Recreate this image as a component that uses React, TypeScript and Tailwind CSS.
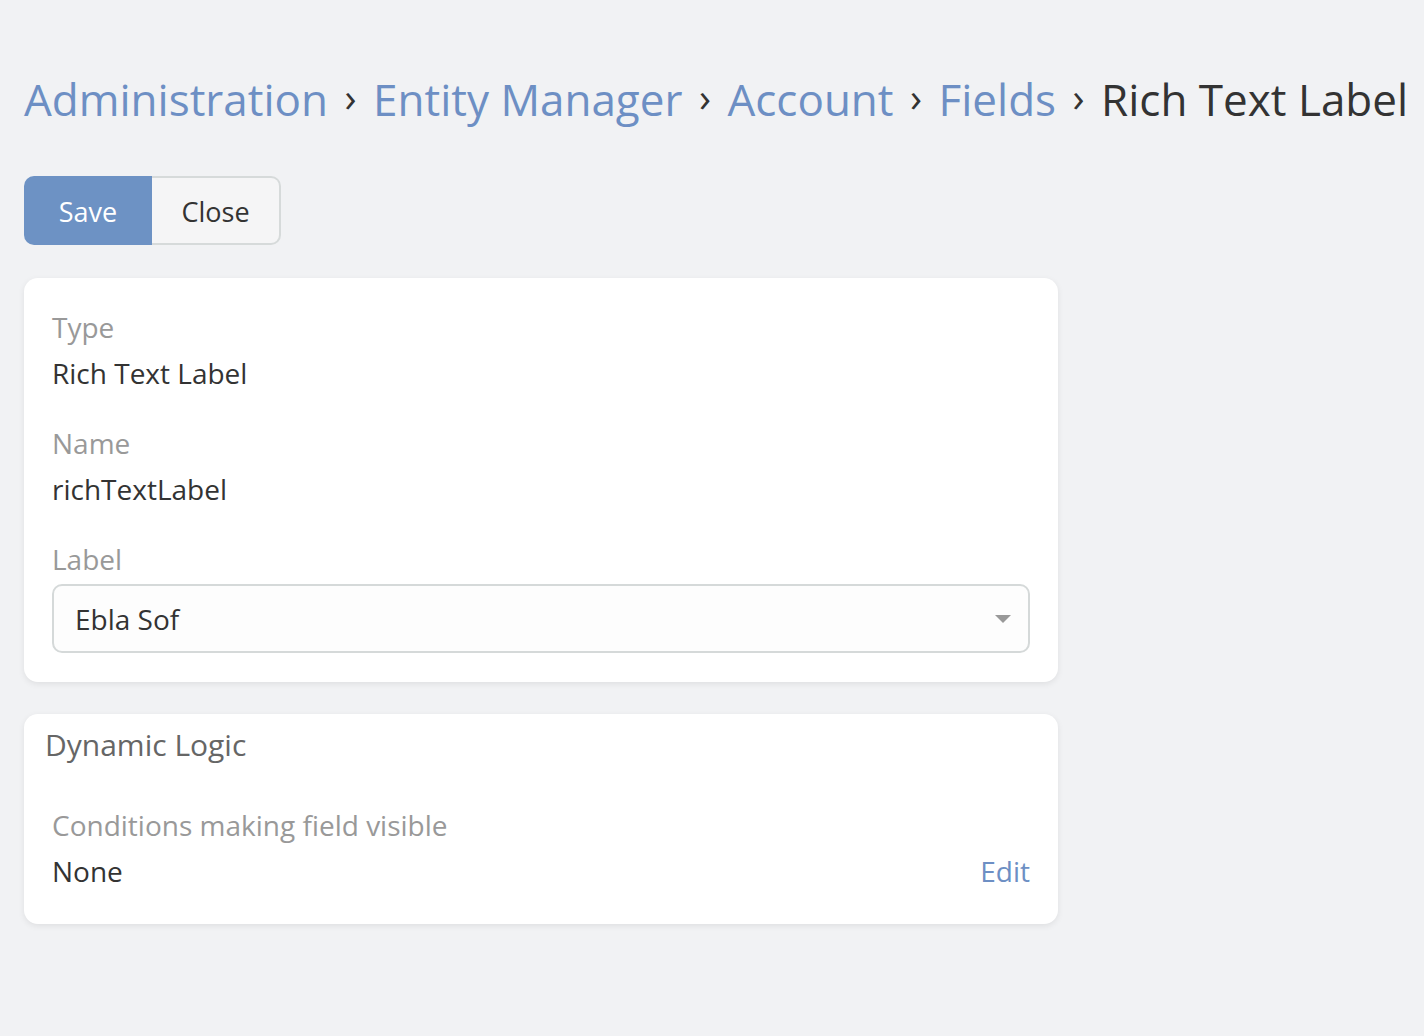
// Field edit view: breadcrumb header, action buttons, field panel and dynamic logic panel

const crumbs = ['Administration', 'Entity Manager', 'Account', 'Fields'];

function Separator() {
  return (
    <span className="inline-block w-[45px] text-center text-[#333] text-[40px] leading-none pb-[4px]">›</span>
  );
}

function Field({ label, children }: { label: string; children: React.ReactNode }) {
  return (
    <div>
      <div className="text-[28px] leading-[40px] text-[#999]">{label}</div>
      <div className="mt-[6px] text-[28px] leading-[40px] text-[#333]">{children}</div>
    </div>
  );
}

export default function App() {
  return (
    <div
      className="min-h-[1036px] bg-[#f1f2f4] px-[24px] pt-[69px]"
      style={{ fontFamily: '"Open Sans", "Noto Sans", sans-serif' }}
    >
      {/* Breadcrumb */}
      <div className="flex items-center h-[60px] text-[44px] whitespace-nowrap">
        {crumbs.map((c) => (
          <span key={c} className="flex items-center">
            <a className="text-[#6d8fc4]">{c}</a>
            <Separator />
          </span>
        ))}
        <span className="text-[#333]">Rich Text Label</span>
      </div>

      {/* Buttons */}
      <div className="mt-[47px] flex">
        <button className="h-[69px] w-[128px] rounded-l-[10px] bg-[#6d92c4] text-white text-[27px] pt-[3px]">
          Save
        </button>
        <button className="h-[69px] w-[129px] rounded-r-[10px] border-2 border-l-0 border-[#d6dada] bg-[#f5f5f6] text-[#333] text-[27px] pt-[3px]">
          Close
        </button>
      </div>

      {/* Main panel */}
      <div className="mt-[33px] w-[1034px] rounded-[14px] bg-white shadow-[0_2px_6px_rgba(0,0,0,0.08)] px-[28px] pt-[29px] pb-[29px]">
        <div className="flex flex-col gap-[30px]">
          <Field label="Type">Rich Text Label</Field>
          <Field label="Name">richTextLabel</Field>
          <div>
            <div className="text-[28px] leading-[40px] text-[#999]">Label</div>
            <div className="mt-[5px] flex items-center justify-between h-[69px] rounded-[10px] border-2 border-[#d5d9d9] bg-[#fdfdfd] pl-[21px] pr-[17px]">
              <span className="text-[28px] text-[#333]">Ebla Sof</span>
              <svg width="16" height="8" viewBox="0 0 16 8">
                <path d="M0 0h16L8 8z" fill="#999" />
              </svg>
            </div>
          </div>
        </div>
      </div>

      {/* Dynamic logic panel */}
      <div className="mt-[32px] w-[1034px] rounded-[14px] bg-white shadow-[0_2px_6px_rgba(0,0,0,0.08)]">
        <div className="px-[21px] pt-[10px] text-[30px] leading-[42px] text-[#666]">Dynamic Logic</div>
        <div className="px-[28px] pt-[39px] pb-[33px]">
          <div className="text-[28px] leading-[40px] text-[#999]">Conditions making field visible</div>
          <div className="mt-[6px] flex items-center justify-between">
            <span className="text-[28px] leading-[40px] text-[#333]">None</span>
            <a className="text-[28px] leading-[40px] text-[#6d8fc4]">Edit</a>
          </div>
        </div>
      </div>
    </div>
  );
}
